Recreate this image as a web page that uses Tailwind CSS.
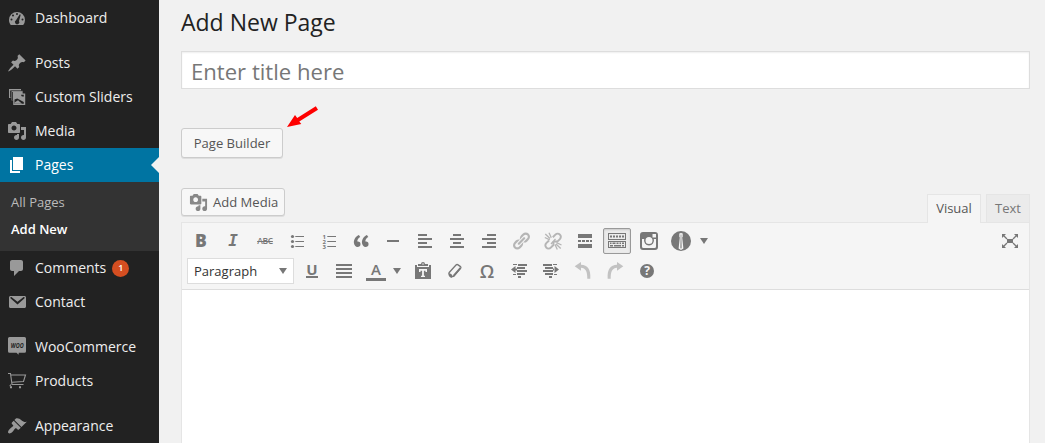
<!DOCTYPE html>
<html lang="en">
<head>
<meta charset="utf-8">
<title>Add New Page</title>
<script src="https://cdn.jsdelivr.net/npm/@tailwindcss/browser@4"></script>
</head>
<body class="h-[443px] overflow-hidden bg-[#f1f1f1] font-['Open_Sans',sans-serif] text-[13px] text-[#444]">
<div class="flex h-full">
  <nav class="w-[159px] shrink-0 bg-[#222] pt-px text-sm text-[#eee]">
    <a class="flex h-[34px] items-center gap-2 pl-[7px] mb-[11px]">
      <svg class="size-5 shrink-0 fill-[#999]" viewBox="0 0 20 20"><path fill-rule="evenodd" d="M3.8 17h12.4A8 8 0 0 0 18 12a8 8 0 0 0-16 0c0 1.9.7 3.600 1.800 5zM10 5a1 1 0 1 1 0 2 1 1 0 0 1 0-2zM6 6.500a1 1 0 1 1 0 2 1 1 0 0 1 0-2zM12.800 6.200l.9.500-1.700 6.200A2.200 2.200 0 1 1 9 12.200zM4.500 10.500a1 1 0 1 1 0 2 1 1 0 0 1 0-2zM15.500 10.500a1 1 0 1 1 0 2 1 1 0 0 1 0-2z"/></svg>
      <span>Dashboard</span></a>
    <a class="flex h-[34px] items-center gap-2 pl-[7px]">
      <svg class="size-5 shrink-0 fill-[#999]" viewBox="0 0 20 20"><path d="M10.440 3.020l1.820-1.820 6.360 6.350-1.830 1.820c-1.050-.68-2.480-.57-3.410.36l-.75.75c-.92.93-1.040 2.350-.35 3.410l-1.830 1.820-2.410-2.410-2.800 2.790c-.42.42-3.380 2.710-3.800 2.290s1.860-3.390 2.280-3.810l2.790-2.790L4.100 9.360l1.830-1.820c1.050.69 2.480.57 3.400-.36l.75-.75c.93-.92 1.050-2.350.36-3.410z"/></svg>
      <span>Posts</span></a>
    <a class="flex h-[34px] items-center gap-2 pl-[7px]">
      <svg class="size-5 shrink-0 fill-[#999]" viewBox="0 0 20 20"><path d="M2 2h12v9H2z"/><path d="M3.200 3.500h1v7h-1z" class="fill-[#222]"/><path d="M4.200 3.700h11.800v10H4.200z" stroke="#222" stroke-width=".7"/><path d="M5.200 5h.8v8h-.8z" class="fill-[#222]"/><path d="M6.200 6.500h12V18h-12z"/><path d="M7.500 12.500l2.700-1 6.600 3.500v1.700H7.500zM14 7.700h2.800V9.500l-2 .5z" class="fill-[#222]"/><path d="M7.500 15.500l3.500-2.300 4 3.500H7.500zM12.500 10l2-.8 2.300.8v3l-2.500-.7z"/></svg>
      <span>Custom Sliders</span></a>
    <a class="flex h-[34px] items-center gap-2 pl-[7px]">
      <svg class="size-5 shrink-0 fill-[#999]" viewBox="0 0 20 20"><path d="M13 11V4c0-.55-.45-1-1-1h-1.670L9 1H5L3.670 3H2c-.55 0-1 .45-1 1v7c0 .55.45 1 1 1h10c.55 0 1-.45 1-1zM7 4.500c1.380 0 2.500 1.120 2.500 2.500S8.380 9.500 7 9.500 4.500 8.380 4.500 7 5.620 4.500 7 4.500zM14 6h5v10.500c0 1.380-1.120 2.500-2.500 2.500S14 17.880 14 16.500s1.120-2.500 2.500-2.500c.17 0 .34.02.5.05V9h-3V6zm-4 8.050V13h2v3.500c0 1.380-1.120 2.500-2.500 2.500S7 17.880 7 16.500 8.120 14 9.500 14c.17 0 .34.02.5.05z"/></svg>
      <span>Media</span></a>
    <a class="flex h-[34px] items-center gap-2 bg-[#0074a2] pl-[7px] text-white">
      <svg class="size-5 shrink-0 fill-white" viewBox="0 0 20 20"><path d="M6 15V2h10v13H6zm-1 1h8v2H3V5h2v11z"/></svg>
      <span>Pages</span>
      <svg class="ml-auto h-4 w-2 fill-[#f1f1f1]" viewBox="0 0 8 16"><path d="M8 0v16L0 8z"/></svg></a>
    <div class="flex h-[69px] flex-col bg-[#333] px-[11px] pt-[7px] text-[13px] leading-[27px]">
      <a class="text-[#bbb]">All Pages</a>
      <a class="font-semibold text-white">Add New</a>
    </div>
    <a class="flex h-[34px] items-center gap-2 pl-[7px]">
      <svg class="size-5 shrink-0 fill-[#999]" viewBox="0 0 20 20"><path d="M5 2h9c1.100 0 2 .9 2 2v7c0 1.100-.9 2-2 2h-2l-5 5v-5H5c-1.100 0-2-.9-2-2V4c0-1.100.9-2 2-2z"/></svg>
      <span>Comments</span>
      <span class="-ml-0.5 flex size-[17px] items-center justify-center rounded-full bg-[#d54e21] text-[9px] font-semibold text-white">1</span></a>
    <a class="mb-[11px] flex h-[34px] items-center gap-2 pl-[7px]">
      <svg class="size-5 shrink-0 fill-[#999]" viewBox="0 0 20 20"><path fill-rule="evenodd" d="M3.500 4h14c.8 0 1.500.7 1.500 1.500v9c0 .8-.7 1.500-1.500 1.500h-14c-.8 0-1.500-.7-1.500-1.500v-9C2 4.700 2.700 4 3.500 4zM3.600 5.300c-.4.400-.2.900.1 1.200l6.800 6 6.800-6c.3-.3.500-.8.100-1.200-.3-.3-.8-.2-1.100 0l-5.800 4.400-5.800-4.400c-.3-.2-.8-.3-1.100 0z"/></svg>
      <span>Contact</span></a>
    <a class="flex h-[34px] items-center gap-2 pl-[7px]">
      <svg class="size-5 shrink-0 fill-[#999]" viewBox="0 0 20 20"><path d="M2.500 0h15q1.500 0 1.500 1.500v12.700q0 1.500-1.500 1.500h-5.700l-.3 2-2-2H2.500q-1.500 0-1.500-1.500V1.500Q1 0 2.500 0z"/><text x="10.200" y="10.700" text-anchor="middle" textLength="12.800" lengthAdjust="spacingAndGlyphs" class="fill-[#222] text-[7.500px] font-bold italic">WOO</text></svg>
      <span>WooCommerce</span></a>
    <a class="mb-[11px] flex h-[34px] items-center gap-2 pl-[7px]">
      <svg class="size-5 shrink-0 fill-none stroke-[#999]" viewBox="0 0 20 20" stroke-width="1.100"><path d="M1 2.500h2.500L5 13.500h11.500M4 4h14.500l-2 6.500-11.500.8M3.800 13.500l-1 1.700"/><path d="M3 16.200h2M12 16.200h2" stroke-width="1.900"/></svg>
      <span>Products</span></a>
    <a class="flex h-[34px] items-center gap-2 pl-[7px]">
      <svg class="size-5 shrink-0 fill-[#999]" viewBox="0 0 20 20"><path d="M14.480 11.060L7.410 3.990l1.500-1.500c.5-.56 2.300-.47 3.510.32 1.210.8 1.430 1.280 2.910 2.100 1.180.64 2.450 1.260 4.450.85zm-.71.71L6.700 4.700 4.930 6.470c-.39.39-.39 1.020 0 1.410l1.060 1.060c.39.39.39 1.030 0 1.420-.6.6-1.430 1.110-2.210 1.690-.35.26-.7.53-1.010.84C1.430 14.230.4 16.080 1.400 17.070c.99 1 2.840-.03 4.180-1.360.31-.31.58-.66.85-1.020.57-.78 1.080-1.610 1.690-2.210.39-.39 1.020-.39 1.410 0l1.060 1.060c.39.39 1.020.39 1.410 0z"/></svg>
      <span>Appearance</span></a>
  </nav>

  <main class="flex flex-1 flex-col pr-[15px] pl-[22px]">
    <h1 class="mt-[7px] h-11 text-[23px] leading-[31px] text-[#222]">Add New Page</h1>
    <div class="h-[38px] shrink-0 border border-[#ddd] bg-white px-[9px] text-[22.100px] leading-[38px] text-[#777] shadow-[inset_0_1px_2px_rgba(0,0,0,0.07)]">Enter title here</div>
    <div class="mt-[17px] flex h-[52px] shrink-0 items-end">
      <button class="h-[30px] w-[102px] rounded-[3px] border border-[#ccc] bg-[#f7f7f7] pt-0.5 text-[13.050px] text-[#555] shadow-[0_1px_0_rgba(0,0,0,0.08)]">Page Builder</button>
      <svg class="mb-[30px] ml-1 h-[22px] w-8 fill-[#fe0000]" viewBox="0 0 32 22"><path d="M0 21L8 9l2.200 3.100L28.800.2l2.200 3.500L12.300 15.500l2 2.500z"/></svg>
    </div>
    <div class="mt-[30px] flex h-[34px] shrink-0 items-start">
      <button class="flex h-7 w-[104px] items-center gap-1 rounded-[3px] border border-[#ccc] bg-[#f7f7f7] pl-[7px] text-[13.050px] text-[#555] shadow-[0_1px_0_rgba(0,0,0,0.08)]">
        <svg class="size-[19px] shrink-0 fill-[#888]" viewBox="0 0 20 20"><path d="M13 11V4c0-.55-.45-1-1-1h-1.670L9 1H5L3.670 3H2c-.55 0-1 .45-1 1v7c0 .55.45 1 1 1h10c.55 0 1-.45 1-1zM7 4.500c1.380 0 2.500 1.120 2.500 2.500S8.380 9.500 7 9.500 4.500 8.380 4.500 7 5.620 4.500 7 4.500zM14 6h5v10.500c0 1.380-1.120 2.500-2.500 2.500S14 17.880 14 16.500s1.120-2.500 2.500-2.500c.17 0 .34.02.5.05V9h-3V6zm-4 8.050V13h2v3.500c0 1.380-1.120 2.500-2.500 2.500S7 17.880 7 16.500 8.120 14 9.500 14c.17 0 .34.02.5.05z"/></svg><span class="pt-0.5 pl-px whitespace-nowrap">Add Media</span></button>
      <div class="z-10 mt-[6px] ml-auto flex gap-[5px]">
        <div class="h-[29px] w-[54px] border border-b-0 border-[#e5e5e5] bg-[#f5f5f5] text-center leading-[27px] text-[#555]">Visual</div>
        <div class="h-7 w-11 border border-b-0 border-[#e5e5e5] bg-[#ebebeb] text-center leading-[27px] text-[#777]">Text</div>
      </div>
    </div>
    <section class="flex flex-1 flex-col border border-b-0 border-[#e5e5e5] bg-white">
      <div class="h-[67px] shrink-0 border-b border-[#ddd] bg-[#f5f5f5] pt-[3px] pl-[3px] text-[#777]">
        <div class="flex h-[30px] items-center">
          <span class="w-8 text-center text-[17.500px] leading-none font-extrabold">B</span>
          <span class="w-8 text-center font-['DejaVu_Sans_Mono'] text-[16px] leading-none font-bold italic">I</span>
          <span class="w-8 text-center text-[8.500px] leading-none font-semibold tracking-[-0.300px] line-through">ABC</span>
          <svg class="mx-1.5 size-5 fill-current" viewBox="0 0 20 20"><path d="M8.300 5H17v1H8.300zM8.300 10H17v1H8.300zM8.300 15H17v1H8.300z"/><circle cx="5.500" cy="5.500" r="1.600"/><circle cx="5.500" cy="10.500" r="1.600"/><circle cx="5.500" cy="15.500" r="1.600"/></svg>
          <svg class="mx-1.5 size-5 fill-current" viewBox="0 0 20 20"><path d="M8.300 5H17v1H8.300zM8.300 10H17v1H8.300zM8.300 15H17v1H8.300z"/><g class="text-[6px] font-bold"><text x="3.600" y="7.700">1</text><text x="3.600" y="12.700">2</text><text x="3.600" y="17.700">3</text></g></svg>
          <svg class="mx-1.5 size-5 fill-current" viewBox="0 0 20 20"><path d="M9.490 13.220c0-.74-.2-1.380-.61-1.900-.62-.78-1.830-.88-2.530-.72-.29-1.650 1.110-3.750 2.920-4.650L7.880 4c-2.730 1.300-5.420 4.280-4.960 8.050C3.210 14.430 4.590 16 6.540 16c.85 0 1.560-.25 2.120-.75s.83-1.180.83-2.030zm8.050 0c0-.74-.2-1.380-.61-1.900-.63-.78-1.830-.88-2.530-.72-.29-1.650 1.110-3.750 2.920-4.650L15.930 4c-2.730 1.300-5.410 4.280-4.950 8.050.29 2.380 1.660 3.950 3.610 3.950.85 0 1.560-.25 2.120-.75s.83-1.180.83-2.030z"/></svg>
          <svg class="mx-1.5 size-5 fill-current" viewBox="0 0 20 20"><path d="M4 9h12v2H4z"/></svg>
          <svg class="mx-1.5 size-5 fill-current" viewBox="0 0 20 20"><path d="M3 3h9v2H3zM3 7h14v2H3zM3 11h9v2H3zM3 15h14v2H3z"/></svg>
          <svg class="mx-1.5 size-5 fill-current" viewBox="0 0 20 20"><path d="M6 3h8v2H6zM3 7h14v2H3zM6 11h8v2H6zM3 15h14v2H3z"/></svg>
          <svg class="mx-1.5 size-5 fill-current" viewBox="0 0 20 20"><path d="M8 3h9v2H8zM3 7h14v2H3zM8 11h9v2H8zM3 15h14v2H3z"/></svg>
          <svg class="mx-1.5 size-5 fill-current opacity-50" viewBox="0 0 20 20"><path d="M17.740 2.760c1.680 1.690 1.680 4.410 0 6.100l-1.530 1.520c-1.120 1.120-2.700 1.470-4.140 1.090l2.620-2.610.76-.77.76-.76c.84-.84.84-2.200 0-3.040-.84-.85-2.200-.85-3.040 0l-.77.76-3.380 3.380c-.37-1.440-.02-3.020 1.100-4.140l1.520-1.530c1.690-1.680 4.420-1.680 6.100 0zM8.590 13.430l5.340-5.340c.42-.42.42-1.100 0-1.520-.44-.43-1.130-.39-1.530 0l-5.330 5.340c-.42.42-.42 1.100 0 1.520.44.43 1.130.39 1.520 0zm-.76 2.290l4.140-4.150c.38 1.440.03 3.020-1.090 4.140l-1.520 1.530c-1.690 1.680-4.410 1.680-6.100 0-1.680-1.680-1.680-4.420 0-6.100l1.530-1.520c1.120-1.120 2.700-1.470 4.140-1.100l-4.140 4.150c-.85.84-.85 2.200 0 3.050.84.84 2.200.84 3.040 0z"/></svg>
          <svg class="mx-1.5 size-5 fill-none stroke-current opacity-50" viewBox="0 0 20 20"><path d="M9.800 6.200l2.600-2.600a3.100 3.100 0 0 1 4.500 4.500l-2.600 2.500h-3.500M6 9.500l-2.700 2.600a3.100 3.100 0 0 0 4.500 4.500l2.600-2.600v-3.500" stroke-width="2"/><path d="M2.300 3l4.700 4.500M6 1.800l2.300 5M1.800 6.500l5 2.300M17.700 17.500L13 13M14.300 18.500l-2.300-5M18.500 14l-5-2.300M8 13l4.500-5" stroke-width="1.300"/></svg>
          <svg class="mx-1.5 size-5 fill-current" viewBox="0 0 20 20"><path d="M3 3h14v4H3zM3 9h3v2H3zM7 9h3v2H7zM11 9h3v2h-3zM15 9h2v2h-2zM3 13h14v4H3z"/></svg>
          <span class="mx-0.5 flex h-[26px] w-7 items-center justify-center rounded-[2px] border border-[#999] bg-[#ebebeb] shadow-[inset_0_1px_2px_rgba(0,0,0,0.15)]"><svg class="size-5 shrink-0 fill-current" viewBox="0 0 20 20"><path fill-rule="evenodd" d="M1 2h18v7H1zM2 3v5h16V3zM1 10h18v7H1zM2 11v5h16v-5z"/><path d="M3 4.500h2v2H3zM6 4.500h2v2H6zM9 4.500h2v2H9zM12 4.500h2v2h-2zM15 4.500h2v2h-2zM3 11.500h1.500v1.500H3zM5.500 11.500h3v1.500h-3zM9.500 11.500h2v1.500h-2zM12.500 11.500h1.500v1.500h-1.500zM15 11.500h2v1.500h-2zM3 14h3v1.500H3zM7 14h7v1.500H7zM15 14h2v1.500h-2z"/></svg></span>
          <svg class="mx-1.5 size-5 fill-current" viewBox="0 0 20 20"><path fill-rule="evenodd" d="M4 1h12q3 0 3 3v12q0 3-3 3H4q-3 0-3-3V4q0-3 3-3zM13.500 3v3.500H17V3zM3 8v7.500Q3 17 4.500 17h11q1.500 0 1.500-1.500V8h-2.200a5 5 0 1 1-9.600 0zM10 6a3.500 3.500 0 1 0 0 7 3.500 3.500 0 0 0 0-7z"/></svg>
          <svg class="mx-1.5 size-5 fill-current" viewBox="0 0 20 20"><circle cx="10" cy="10" r="10"/><path d="M8.300 2.500q1.700-1 3.400 0v3.300l-.5.700 1.200 11L10 19l-2.400-1.500 1.200-11-.5-.7z" fill="#f5f5f5"/><path d="M9.500 3.500h1v2.500l.5 10.500-1 1.500-1-1.500.5-10.500z" opacity=".6"/></svg>
          <svg class="ml-[3px] h-1.5 w-2 fill-current" viewBox="0 0 8 6"><path d="M0 0h8L4 6z"/></svg>
          <svg class="mr-[9px] ml-auto size-5 fill-current" viewBox="0 0 20 20"><path d="M7 8h6v4H7zM2 3h4L2 7zM18 3v4l-4-4zM2 17v-4l4 4zM18 17h-4l4-4z"/><path d="M3 4l4 4M17 4l-4 4M3 16l4-4M17 16l-4-4" class="stroke-current" stroke-width="1.300"/></svg>
        </div>
        <div class="flex h-[30px] items-center">
          <span class="mr-0.5 ml-0.5 flex h-[26px] w-[107px] shrink-0 items-center justify-between border border-[#ddd] bg-white px-1.5 text-[13px] text-[#333]"><span class="pt-0.5">Paragraph</span><svg class="h-1.5 w-2 fill-[#777]" viewBox="0 0 8 6"><path d="M0 0h8L4 6z"/></svg></span>
          <span class="w-8 text-center"><span class="inline-block h-[15px] border-b-2 border-current text-[15px] leading-[13px] font-bold">U</span></span>
          <svg class="mx-1.5 size-5 fill-current" viewBox="0 0 20 20"><path d="M2 3h16v2H2zM2 7h16v2H2zM2 11h16v2H2zM2 15h16v2H2z"/></svg>
          <span class="mx-1.5 flex h-5 w-5 flex-col items-center justify-between"><span class="text-[15px] leading-[17px] font-semibold">A</span><span class="h-[3px] w-5 bg-current"></span></span>
          <svg class="mr-1.5 ml-px h-1.5 w-2 fill-current" viewBox="0 0 8 6"><path d="M0 0h8L4 6z"/></svg>
          <svg class="mx-1.5 size-5 fill-current" viewBox="0 0 20 20"><path fill-rule="evenodd" d="M2 4h2v2h12V4h2v14H2zM6 8v3h1.500v-1.200h1.600v5H8V16h4v-1.200h-1.100v-5h1.600V11H14V8z"/><path fill-rule="evenodd" d="M5 5V3h3q0-2 2-2t2 2h3v2zM9.200 2.500h1.600v1H9.200z"/></svg>
          <svg class="mx-1.5 size-5 fill-none stroke-current" viewBox="0 0 20 20"><path d="M4.200 11.500L11 4q.8-.8 1.700-.4l2.800 2q.8.700.2 1.500L9 15q-1 1-2.500.2L4.300 13.500q-.9-.9-.1-2z" stroke-width="1.300"/><path d="M4.300 12.300q2 .1 3.800 3.200L6.300 17q-2.300-1-2.800-3z" class="fill-current stroke-none"/><path d="M8.500 14.800l7-8" stroke-width="1.800"/></svg>
          <span class="w-8 text-center text-[18.500px] leading-5 font-semibold">Ω</span>
          <svg class="mx-1.5 size-5 fill-current" viewBox="0 0 20 20"><path d="M4 3h4v1H4zM9 3h9v2H9zM8 6h8v2H8zM8 9h10v2H8zM8 12h8v2H8zM4 13h3v1H4zM9 15h3v2H9zM6.500 5v7L2 8.500zM6 7.500h2v2H6z"/></svg>
          <svg class="mx-1.5 size-5 fill-current" viewBox="0 0 20 20"><path d="M2 3h9v2H2zM12 3h4v1h-4zM4 6h8v2H4zM2 9h10v2H2zM4 12h8v2H4zM13 13h3v1h-3zM8 15h3v2H8zM13.500 5v7L18 8.500zM12 7.500h2v2h-2z"/></svg>
          <svg class="mx-1.5 size-5 fill-current opacity-40" viewBox="0 0 20 20"><path d="M8 1v2.800c6.500 0 10 4.700 9.300 13.900h-3C14.500 10.500 12.500 7 8 6.800v3L1.700 5.200z"/></svg>
          <svg class="mx-1.5 size-5 fill-current opacity-40" viewBox="0 0 20 20"><path d="M12 1v2.800C5.500 3.800 2 8.500 2.700 17.700h3C5.500 10.500 7.500 7 12 6.800v3l6.300-4.600z"/></svg>
          <span class="mx-[9px] flex size-3.5 items-center justify-center rounded-full bg-[#777] text-[12px] leading-none font-bold text-[#f5f5f5]">?</span>
        </div>
      </div>
    </section>
  </main>
</div>
</body>
</html>
